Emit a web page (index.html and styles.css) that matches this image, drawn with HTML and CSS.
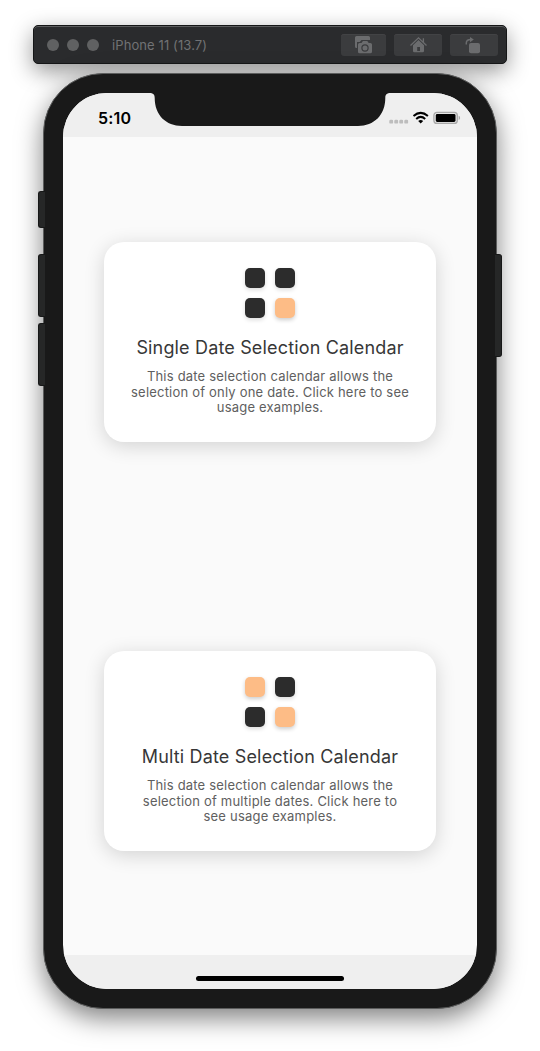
FILE: index.html
```html
<!DOCTYPE html>
<html lang="en">
<head>
<meta charset="utf-8">
<title>iPhone 11 (13.7)</title>
<link rel="stylesheet" href="styles.css">
</head>
<body>
<div class="simulator">
  <header class="toolbar">
    <div class="lights"><i></i><i></i><i></i></div>
    <span class="device-name">iPhone 11 (13.7)</span>
    <div class="tools">
      <div class="tool tool-first">
        <svg width="45" height="22" viewBox="0 0 45 22">
          <path fill="#6b6c6e" d="M15.500 2h12q1.500 0 1.500 1.500V6h-8.500l-1.700 2h-2.800V14h-.5q-1.500 0-1.500-1.500v-9Q14 2 15.500 2z"/>
          <path fill="#6b6c6e" d="M18.500 9h2l1.400-2h4.400l1.400 2h1.600q1.700 0 1.700 1.500v7.200q0 1.500-1.700 1.500H18.500q-1.500 0-1.500-1.500v-7.200q0-1.500 1.500-1.500z"/>
          <circle cx="24" cy="14" r="3.100" fill="#6b6c6e" stroke="#3b3c3e" stroke-width="1.200"/>
        </svg>
      </div>
      <div class="tool">
        <svg width="48" height="22" viewBox="0 0 48 22">
          <path fill="none" stroke="#6b6c6e" stroke-width="1.300" d="M16.500 11.500l8-7.700 8 7.700M29.400 8.300V4.300"/>
          <path fill="#6b6c6e" fill-rule="evenodd" d="M19 11.300l5.500-5.300 5.500 5.300v5.700q0 1.300-1.300 1.300h-8.400q-1.300 0-1.300-1.300zM23.200 13v4h2.800v-4z"/>
        </svg>
      </div>
      <div class="tool">
        <svg width="48" height="22" viewBox="0 0 48 22">
          <rect x="19" y="9" width="11" height="10.300" rx="2" fill="#6b6c6e"/>
          <path fill="none" stroke="#6b6c6e" stroke-width="1.500" d="M16.300 10.500V9q0-3.500 4.700-3.500"/>
          <path fill="#6b6c6e" d="M20 3l3.800 2.600L20 8.200z"/>
        </svg>
      </div>
    </div>
  </header>

  <main class="phone">
    <i class="key mute"></i><i class="key volume-up"></i><i class="key volume-down"></i><i class="key power"></i>
    <div class="screen">
      <svg class="notch" width="414" height="34" viewBox="0 0 414 34">
        <path fill="#191919" d="M86 0C90.500 0 91.700 1.500 91.700 5C91.700 22 103 33 119 33H295C311 33 322.300 22 322.300 5C322.300 1.500 323.500 0 328 0z"/>
      </svg>
      <div class="status">
        <span class="time">5:10</span>
        <svg class="signals" width="76" height="16" viewBox="0 0 76 16">
          <g fill="#bdbdbd"><rect x="3.300" y="9.800" width="3.800" height="3.800" rx="1.200"/><rect x="8.300" y="9.800" width="3.800" height="3.800" rx="1.200"/><rect x="13.300" y="9.800" width="3.800" height="3.800" rx="1.200"/><rect x="18.300" y="9.800" width="3.800" height="3.800" rx="1.200"/></g>
          <g fill="none" stroke="#000" stroke-width="2"><path d="M27.500 6.100q7.200-6.400 14.400 0"/><path d="M30.200 8.900q4.500-4 9 0"/></g>
          <path d="M32.200 11.100q2.500-2 5 0L34.700 13.600z"/>
          <rect x="47.900" y="2.400" width="23.400" height="11" rx="3" fill="#e4e4e4" stroke="#a9a9a9" stroke-width="1.300"/>
          <rect x="49.800" y="4" width="19.700" height="8" rx="1.400"/>
          <path fill="#a9a9a9" d="M72.700 5.800q1.400.5 1.400 2.100t-1.400 2.100z"/>
        </svg>
      </div>
      <div class="content">
        <section class="slot">
          <article class="card">
            <div class="grid"><i></i><i></i><i></i><i class="on"></i></div>
            <h2 class="title">Single Date Selection Calendar</h2>
            <p class="text">This date selection calendar allows the<br>selection of only one date. Click here to see<br>usage examples.</p>
          </article>
        </section>
        <section class="slot">
          <article class="card">
            <div class="grid"><i class="on"></i><i></i><i></i><i class="on"></i></div>
            <h2 class="title">Multi Date Selection Calendar</h2>
            <p class="text">This date selection calendar allows the<br>selection of multiple dates. Click here to<br>see usage examples.</p>
          </article>
        </section>
      </div>
      <footer class="home-area"><div class="home-bar"></div></footer>
    </div>
  </main>
</div>
</body>
</html>
```
FILE: styles.css
```css
* { box-sizing: border-box; }
body { margin: 0; background: #fff; font-family: Inter, "Liberation Sans", sans-serif; overflow: hidden; }
.simulator { width: 540px; height: 1051px; padding-top: 25px; display: flex; flex-direction: column; align-items: center; gap: 9px; overflow: hidden; }

.toolbar { position: relative; z-index: 0; width: 474px; height: 39px; flex: none; padding: 0 9px 0 14px; display: flex; align-items: center; background: #2a2b2d; border: 1px solid #151617; border-radius: 5px; box-shadow: inset 0 1px #5c5d5e, 0 7px 22px rgba(0,0,0,.42); }
.lights { display: flex; gap: 8px; margin-left: -1px; }
.lights i { width: 12px; height: 12px; border-radius: 50%; background: #606162; }
.device-name { margin-left: 13px; color: #717274; font-size: 13px; letter-spacing: .1px; white-space: nowrap; }
.tools { display: flex; gap: 8px; margin-left: auto; margin-right: -1px; }
.tool { width: 48px; height: 22px; border-radius: 3px; background: #3b3c3e; box-shadow: inset 0 1px #424345; }
.tool-first { width: 45px; }
.tool svg { display: block; }

.phone { position: relative; z-index: 1; width: 454px; height: 936px; flex: none; padding: 19px; border: 1px solid #5c5d5d; border-radius: 60px; background: #191919; box-shadow: 0 9px 26px rgba(0,0,0,.5); }
.key { position: absolute; z-index: -1; left: -6px; width: 7px; border-radius: 3px 0 0 3px; background: #262727; border: 1px solid #171818; border-right: 0; }
.mute { top: 117px; height: 37px; }
.volume-up { top: 180px; height: 63px; }
.volume-down { top: 249px; height: 63px; }
.power { left: auto; right: -6px; top: 180px; height: 103px; border-radius: 0 3px 3px 0; border: 1px solid #171818; border-left: 0; }

.screen { position: relative; width: 414px; height: 896px; border-radius: 44px; overflow: hidden; background: #fafafa; display: flex; flex-direction: column; }
.notch { position: absolute; left: 0; top: 0; }
.status { height: 44px; flex: none; padding: 16px 15px 0 35px; display: flex; justify-content: space-between; align-items: flex-start; background: #efefef; }
.time { font-size: 16px; line-height: 18px; font-weight: 600; letter-spacing: .15px; }
.signals { margin-top: 1px; }
.content { flex: 1; display: flex; flex-direction: column; }
.slot { flex: 1; display: flex; align-items: center; justify-content: center; }
.card { width: 331.2px; height: 200px; padding-top: 26.5px; display: flex; flex-direction: column; align-items: center; background: #fff; border-radius: 20px; box-shadow: 0 4px 20px rgba(0,0,0,.16); }
.grid { display: grid; grid-template-columns: 20px 20px; gap: 10px; }
.grid i { height: 20px; border-radius: 5px; background: #2c2c2c; box-shadow: 0 2px 4px rgba(0,0,0,.14); }
.grid .on { background: #fdbc86; box-shadow: 0 2px 4px rgba(0,0,0,.2); }
.title { margin: 18px 0 0; color: #373737; font-size: 18px; line-height: 24px; font-weight: 400; letter-spacing: .16px; white-space: nowrap; }
.text { margin: 9px 0 0; color: #606060; font-size: 13px; line-height: 15.600px; letter-spacing: .2px; text-align: center; white-space: nowrap; }
.home-area { height: 34px; flex: none; padding-top: 21px; background: #efefef; }
.home-bar { width: 148px; height: 5px; margin: 0 auto; border-radius: 3px; background: #000; }
```
